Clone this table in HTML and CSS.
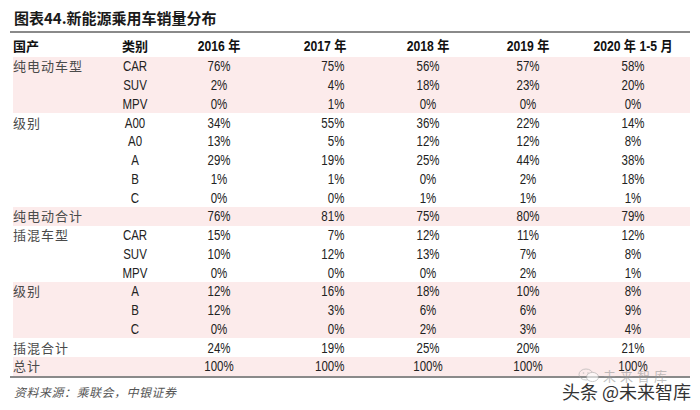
FILE: index.html
```html
<!DOCTYPE html>
<html lang="zh">
<head>
<meta charset="utf-8">
<link rel="stylesheet" href="styles.css">
</head>
<body>
<div class="page">
  <div class="title">图表44.新能源乘用车销量分布</div>
  <div class="table">
    <div class="row head"><div class="c1">国产</div><div class="c2">类别</div><div>2016 年</div><div>2017 年</div><div>2018 年</div><div>2019 年</div><div>2020 年 1-5 月</div></div>
    <div class="row pink"><div class="c1">纯电动车型</div><div class="c2">CAR</div><div>76%</div><div class="r">75%</div><div>56%</div><div>57%</div><div>58%</div></div>
    <div class="row pink"><div class="c1"></div><div class="c2">SUV</div><div>2%</div><div class="r">4%</div><div>18%</div><div>23%</div><div>20%</div></div>
    <div class="row pink"><div class="c1"></div><div class="c2">MPV</div><div>0%</div><div class="r">1%</div><div>0%</div><div>0%</div><div>0%</div></div>
    <div class="row"><div class="c1">级别</div><div class="c2">A00</div><div>34%</div><div class="r">55%</div><div>36%</div><div>22%</div><div>14%</div></div>
    <div class="row"><div class="c1"></div><div class="c2">A0</div><div>13%</div><div class="r">5%</div><div>12%</div><div>12%</div><div>8%</div></div>
    <div class="row"><div class="c1"></div><div class="c2">A</div><div>29%</div><div class="r">19%</div><div>25%</div><div>44%</div><div>38%</div></div>
    <div class="row"><div class="c1"></div><div class="c2">B</div><div>1%</div><div class="r">1%</div><div>0%</div><div>2%</div><div>18%</div></div>
    <div class="row"><div class="c1"></div><div class="c2">C</div><div>0%</div><div class="r">0%</div><div>1%</div><div>1%</div><div>1%</div></div>
    <div class="row pink"><div class="c1">纯电动合计</div><div class="c2"></div><div>76%</div><div class="r">81%</div><div>75%</div><div>80%</div><div>79%</div></div>
    <div class="row"><div class="c1">插混车型</div><div class="c2">CAR</div><div>15%</div><div class="r">7%</div><div>12%</div><div>11%</div><div>12%</div></div>
    <div class="row"><div class="c1"></div><div class="c2">SUV</div><div>10%</div><div class="r">12%</div><div>13%</div><div>7%</div><div>8%</div></div>
    <div class="row"><div class="c1"></div><div class="c2">MPV</div><div>0%</div><div class="r">0%</div><div>0%</div><div>2%</div><div>1%</div></div>
    <div class="row pink"><div class="c1">级别</div><div class="c2">A</div><div>12%</div><div class="r">16%</div><div>18%</div><div>10%</div><div>8%</div></div>
    <div class="row pink"><div class="c1"></div><div class="c2">B</div><div>12%</div><div class="r">3%</div><div>6%</div><div>6%</div><div>9%</div></div>
    <div class="row pink"><div class="c1"></div><div class="c2">C</div><div>0%</div><div class="r">0%</div><div>2%</div><div>3%</div><div>4%</div></div>
    <div class="row"><div class="c1">插混合计</div><div class="c2"></div><div>24%</div><div class="r">19%</div><div>25%</div><div>20%</div><div>21%</div></div>
    <div class="row pink"><div class="c1">总计</div><div class="c2"></div><div>100%</div><div class="r">100%</div><div>100%</div><div>100%</div><div>100%</div></div>
  </div>
  <div class="source">资料来源：乘联会，中银证券</div>
  <div class="wm">
    <div class="wm-faint">
      <svg class="wm-logo" width="22" height="15" viewBox="0 0 22 15">
        <ellipse cx="8" cy="6.5" rx="7" ry="5.5" fill="none" stroke="#aaa" stroke-width="1"/>
        <ellipse cx="14.5" cy="9" rx="6" ry="4.6" fill="#fff" stroke="#aaa" stroke-width="1"/>
        <circle cx="5.5" cy="5" r="0.8" fill="#aaa"/>
        <circle cx="10" cy="5" r="0.8" fill="#aaa"/>
      </svg>
      <span class="wm-faint-text">未来智库</span>
    </div>
    <div class="wm-text">头条 @未来智库</div>
  </div>
</div>
</body>
</html>
```

FILE: styles.css
```css
html, body {
  margin: 0;
  padding: 0;
  background: #fff;
}
.page {
  position: relative;
  width: 700px;
  height: 410px;
  overflow: hidden;
  font-family: "Liberation Sans", "Noto Sans CJK SC", sans-serif;
  color: #222;
}
.title {
  height: 31px;
  box-sizing: border-box;
  padding: 7px 0 0 14px;
  line-height: 22px;
  font-family: "Noto Sans CJK SC", sans-serif;
  font-weight: 700;
  font-size: 15px;
  color: #1a1a1a;
}
.table {
  margin-left: 10px;
  width: 680px;
  border-top: 2px solid #8a8a8a;
  border-bottom: 2px solid #8a8a8a;
}
.row {
  margin-left: 3px;
  width: 677px;
  height: 18.75px;
  display: grid;
  grid-template-columns: 82px 80px 88px 124px 82px 118px 92px 1fr;
  align-items: center;
  text-align: center;
  font-size: 14px;
  line-height: 18px;
}
.row > div {
  transform: scaleX(0.82);
}
.row > .c1 {
  transform: none;
}
.row > .r {
  transform-origin: right center;
}
.row.head {
  height: 24px;
  padding-top: 2px;
  box-sizing: border-box;
  font-weight: 700;
  color: #111;
}
.row.head > div {
  transform: scaleX(0.87);
}
.row.head > .c1 {
  transform: none;
}
.pink {
  background: #fcebeb;
}
.c1 {
  text-align: left;
  font-family: "Noto Sans CJK SC", sans-serif;
  font-size: 13px;
  letter-spacing: 1px;
  color: #4a4a4a;
}
.head .c1 {
  color: #111;
  font-size: 13px;
  letter-spacing: 0;
}
.row.head > .c2 {
  font-family: "Noto Sans CJK SC", sans-serif;
  font-size: 13px;
  text-align: left;
  padding-left: 27px;
  transform: none;
}
.r {
  text-align: right;
  padding-right: 52px;
}
.source {
  margin: 7px 0 0 14px;
  line-height: 14px;
  font-family: "Noto Sans CJK SC", sans-serif;
  font-size: 12px;
  font-style: italic;
  color: #555;
  letter-spacing: 0.5px;
}
.wm {
  position: absolute;
  left: 562px;
  top: 369px;
  width: 136px;
}
.wm-faint {
  display: flex;
  align-items: center;
  gap: 3px;
  padding-left: 16px;
  height: 13px;
  opacity: 0.6;
}
.wm-faint-text {
  font-family: "Noto Sans CJK SC", sans-serif;
  font-size: 13px;
  color: #999;
  line-height: 13px;
  letter-spacing: 4px;
}
.wm-text {
  font-family: "Noto Sans CJK SC", sans-serif;
  font-size: 18px;
  line-height: 18px;
  color: #333;
  text-shadow: 0 0 2px #fff, 0 0 2px #fff;
}
```
